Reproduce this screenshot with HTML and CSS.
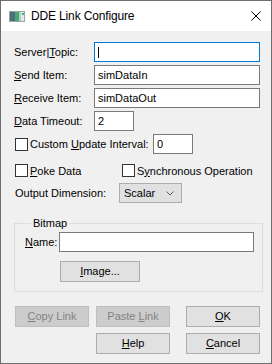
FILE: index.html
```
<!DOCTYPE html>
<html lang="en">
<head>
    <meta charset="UTF-8">
    <title>DDE Link Configure</title>
    <link rel="stylesheet" href="styles.css">
</head>
<body>
    <div class="window">
        <!-- Title bar -->
        <div class="titlebar">
            <svg class="app-icon" width="16" height="11" viewBox="0 0 16 11">
                <rect x="0.5" y="0.5" width="15" height="10" fill="#e4e8e8" stroke="#9aa6a6"/>
                <rect x="1" y="1" width="5" height="9" fill="#4a7078"/>
                <rect x="6" y="1" width="4" height="9" fill="#4aa874"/>
                <rect x="10" y="1" width="2" height="9" fill="#a8d4b8"/>
                <rect x="13" y="2" width="2" height="2" fill="#4aa874"/>
            </svg>
            <span class="title">DDE Link Configure</span>
            <svg class="close" width="10" height="10" viewBox="0 0 10 10">
                <path d="M0.5 0.5 L9.5 9.5 M9.5 0.5 L0.5 9.5" stroke="#000" stroke-width="1" fill="none"/>
            </svg>
        </div>

        <!-- Dialog body -->
        <div class="client">
            <div class="field-row">
                <label>Server|<u>T</u>opic:</label>
                <div class="input wide focused"><span class="caret"></span></div>
            </div>
            <div class="field-row">
                <label><u>S</u>end Item:</label>
                <div class="input wide">simDataIn</div>
            </div>
            <div class="field-row">
                <label><u>R</u>eceive Item:</label>
                <div class="input wide">simDataOut</div>
            </div>
            <div class="field-row">
                <label><u>D</u>ata Timeout:</label>
                <div class="input short">2</div>
            </div>

            <div class="check-row custom-row">
                <span class="checkbox"></span>
                <span class="check-label">Custom <u>U</u>pdate Interval:</span>
                <div class="input short">0</div>
            </div>

            <div class="check-row options-row">
                <div class="check-item poke">
                    <span class="checkbox"></span>
                    <span class="check-label"><u>P</u>oke Data</span>
                </div>
                <div class="check-item">
                    <span class="checkbox"></span>
                    <span class="check-label">S<u>y</u>nchronous Operation</span>
                </div>
            </div>

            <div class="select-row">
                <span class="select-label">Output Dimension:</span>
                <div class="select">
                    <span>Scalar</span>
                    <svg width="8" height="5" viewBox="0 0 8 5">
                        <path d="M0.5 0.5 L4 4 L7.5 0.5" stroke="#606060" fill="none"/>
                    </svg>
                </div>
            </div>

            <fieldset class="group">
                <legend>Bitmap</legend>
                <div class="name-row">
                    <label><u>N</u>ame:</label>
                    <div class="input name"></div>
                </div>
                <button class="btn image-btn"><u>I</u>mage...</button>
            </fieldset>

            <div class="buttons">
                <button class="btn disabled"><u>C</u>opy Link</button>
                <button class="btn disabled">Paste <u>L</u>ink</button>
                <button class="btn"><u>O</u>K</button>
                <span></span>
                <button class="btn"><u>H</u>elp</button>
                <button class="btn"><u>C</u>ancel</button>
            </div>
        </div>
    </div>
</body>
</html>
```

FILE: styles.css
```
* {
    margin: 0;
    padding: 0;
    box-sizing: border-box;
}

body {
    font-family: 'Liberation Sans', Arial, sans-serif;
    font-size: 11px;
    color: #000;
    background: #f0f0f0;
}

u {
    text-decoration: underline;
    text-underline-offset: 1px;
}

.window {
    width: 272px;
    height: 364px;
    border: 1px solid #6e6e6e;
    background: #f0f0f0;
    display: flex;
    flex-direction: column;
}

/* Title bar */
.titlebar {
    height: 30px;
    background: #ffffff;
    display: flex;
    align-items: center;
    padding-left: 8px;
}

.app-icon {
    display: block;
    margin-top: 1px;
}

.title {
    font-size: 12px;
    margin-left: 6px;
    letter-spacing: -0.15px;
}

.close {
    display: block;
    margin-left: auto;
    margin-right: 10px;
}

/* Client area */
.client {
    padding: 11px 0 0 13px;
}

.field-row {
    display: flex;
    align-items: center;
    height: 20px;
    margin-bottom: 3px;
}

.field-row label {
    width: 80px;
}

.input {
    height: 20px;
    background: #fff;
    border: 1px solid #7a7a7a;
    padding: 0 3px;
    display: flex;
    align-items: center;
    font-size: 11px;
}

.input.wide {
    width: 166px;
}

.input.short {
    width: 40px;
}

.input.focused {
    border-color: #0078d7;
}

.caret {
    display: block;
    width: 1px;
    height: 11px;
    background: #000;
}

/* Checkbox rows */
.check-row {
    display: flex;
    align-items: center;
}

.custom-row {
    margin-top: 2px;
    height: 20px;
}

.custom-row .check-label {
    width: 123px;
}

.options-row {
    margin-top: 10px;
    height: 13px;
}

.check-item {
    display: flex;
    align-items: center;
}

.check-item.poke {
    width: 107px;
}

.checkbox {
    display: block;
    width: 13px;
    height: 13px;
    border: 1px solid #333;
    background: #fff;
    margin-left: 1px;
}

.check-label {
    margin-left: 2px;
}

/* Output dimension */
.select-row {
    display: flex;
    align-items: center;
    margin-top: 6px;
    height: 20px;
}

.select-label {
    margin-left: 1px;
    width: 104px;
}

.select {
    width: 63px;
    height: 20px;
    background: #e1e1e1;
    border: 1px solid #adadad;
    display: flex;
    align-items: center;
    justify-content: space-between;
    padding: 0 7px 0 4px;
}

.select svg {
    display: block;
}

/* Bitmap group */
.group {
    width: 249px;
    margin-top: 14px;
    border: 1px solid #dcdcdc;
    padding: 2px 8px 9px 10px;
}

.group legend {
    margin-left: 6px;
    padding: 0 2px;
    line-height: 13px;
}

.name-row {
    display: flex;
    align-items: center;
    height: 20px;
}

.name-row label {
    width: 34px;
}

.input.name {
    flex: 1;
}

.btn {
    display: block;
    font-family: 'Liberation Sans', Arial, sans-serif;
    font-size: 11px;
    line-height: 19px;
    text-align: center;
    color: #000;
    height: 21px;
    background: #e1e1e1;
    border: 1px solid #adadad;
}

.image-btn {
    width: 80px;
    margin: 9px 0 0 35px;
}

/* Bottom buttons */
.buttons {
    display: grid;
    grid-template-columns: 81px 90px 74px;
    row-gap: 6px;
    margin-top: 14px;
    padding-left: 1px;
}

.buttons .btn {
    width: 74px;
}

.btn.disabled {
    background: #cccccc;
    border-color: #bfbfbf;
    color: #838383;
}
```
